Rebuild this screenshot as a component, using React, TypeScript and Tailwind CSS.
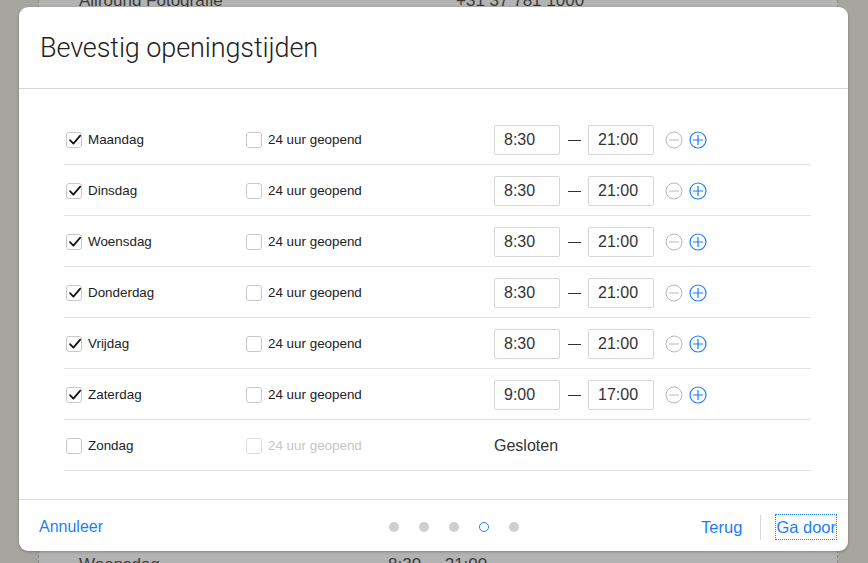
import React from "react";

const days = [
  { name: "Maandag", on: true, from: "8:30", to: "21:00" },
  { name: "Dinsdag", on: true, from: "8:30", to: "21:00" },
  { name: "Woensdag", on: true, from: "8:30", to: "21:00" },
  { name: "Donderdag", on: true, from: "8:30", to: "21:00" },
  { name: "Vrijdag", on: true, from: "8:30", to: "21:00" },
  { name: "Zaterdag", on: true, from: "9:00", to: "17:00" },
  { name: "Zondag", on: false, from: "", to: "" },
];

function Check({ checked, faded }: { checked: boolean; faded?: boolean }) {
  return (
    <span
      className={
        "relative inline-block w-[16px] h-[16px] rounded-[3px] border bg-white " +
        (faded ? "border-[#dedede]" : "border-[#c8c8c8]")
      }
    >
      {checked && (
        <svg className="absolute left-[1px] top-[0px]" width="14" height="14" viewBox="0 0 14 14">
          <path d="M2 7.2 L5.4 10.6 L12.2 2.6" fill="none" stroke="#111" strokeWidth="1.7" strokeLinecap="round" strokeLinejoin="round" />
        </svg>
      )}
    </span>
  );
}

function Minus() {
  return (
    <svg width="18" height="18" viewBox="0 0 18 18">
      <circle cx="9" cy="9" r="8" fill="none" stroke="#b8b8b8" strokeWidth="1" />
      <path d="M4 9 H14" stroke="#b8b8b8" strokeWidth="1" />
    </svg>
  );
}

function Plus() {
  return (
    <svg width="18" height="18" viewBox="0 0 18 18">
      <circle cx="9" cy="9" r="8" fill="none" stroke="#1a7ffb" strokeWidth="1.2" />
      <path d="M4 9 H14 M9 4 V14" stroke="#1a7ffb" strokeWidth="1.2" />
    </svg>
  );
}

export default function App() {
  return (
    <div
      className="relative w-[868px] h-[563px] overflow-hidden bg-[#a6a59f]"
      style={{ fontFamily: '"Liberation Sans", Arial, sans-serif' }}
    >
      {/* page behind */}
      <div className="absolute left-[38px] top-0 w-[800px] h-[563px] bg-[#b3b3b3] border-l border-r border-dashed border-[#8a8a8a]">
        <div className="absolute left-[40px] top-[-12px] text-[17px] text-[#3a3a3a]">Allround Fotografie</div>
        <div className="absolute left-[417px] top-[-12px] text-[17px] text-[#3a3a3a]">+31 37 781 1000</div>
        <div className="absolute left-[40px] top-[552px] text-[17px] text-[#3a3a3a]">Woensdag</div>
        <div className="absolute left-[349px] top-[552px] text-[17px] text-[#3a3a3a]">8:30&nbsp;&nbsp;&nbsp;&nbsp;&nbsp;21:00</div>
      </div>

      {/* modal */}
      <div className="absolute left-[19px] top-[7px] w-[829px] h-[544px] bg-white rounded-[9px] shadow-[0_1px_3px_rgba(0,0,0,0.25)] flex flex-col">
        <div className="h-[82px] border-b border-[#d4d4d4] flex items-center pl-[21px] pt-[2px]">
          <h1
            className="text-[27px] text-[#222] font-light tracking-[-0.1px]"
            style={{ fontFamily: 'Roboto, "Liberation Sans", sans-serif' }}
          >
            Bevestig openingstijden
          </h1>
        </div>

        <div className="flex-1 pt-[25px] pl-[45px] pr-[37px]">
          {days.map((d) => (
            <div key={d.name} className="h-[51px] border-b border-[#e3e3e3] flex items-center pt-[2px]">
              <div className="w-[182px] flex items-center pl-[2px] gap-[6px]">
                <Check checked={d.on} />
                <span className="text-[13.4px] text-[#222]">{d.name}</span>
              </div>
              <div className="w-[248px] flex items-center gap-[6px]">
                <Check checked={false} faded={!d.on} />
                <span className={"text-[13.4px] " + (d.on ? "text-[#222]" : "text-[#c6c6c6]")}>24 uur geopend</span>
              </div>
              {d.on ? (
                <div className="flex items-center">
                  <div className="w-[66px] h-[30px] border border-[#d6d6d6] rounded-[2px] flex items-center pl-[9px] text-[16px] text-[#333]">
                    {d.from}
                  </div>
                  <div className="w-[28px] flex justify-center">
                    <span className="block w-[13px] h-px bg-[#333]"></span>
                  </div>
                  <div className="w-[66px] h-[30px] border border-[#d6d6d6] rounded-[2px] flex items-center pl-[9px] text-[16px] text-[#333]">
                    {d.to}
                  </div>
                  <div className="flex items-center gap-[6px] ml-[11px]">
                    <Minus />
                    <Plus />
                  </div>
                </div>
              ) : (
                <span className="text-[16px] text-[#333]">Gesloten</span>
              )}
            </div>
          ))}
        </div>

        <div className="h-[52px] border-t border-[#dcdcdc] flex items-center pl-[20px] pr-[12px] pt-[3px] text-[16px] text-[#1a7ffb]">
          <div className="w-[350px]">Annuleer</div>
          <div className="flex items-center gap-[20px]">
            <span className="w-[10px] h-[10px] rounded-full bg-[#cfcfcf]"></span>
            <span className="w-[10px] h-[10px] rounded-full bg-[#cfcfcf]"></span>
            <span className="w-[10px] h-[10px] rounded-full bg-[#cfcfcf]"></span>
            <span className="w-[10px] h-[10px] rounded-full border border-[#1a7ffb]"></span>
            <span className="w-[10px] h-[10px] rounded-full bg-[#cfcfcf]"></span>
          </div>
          <div className="flex-1 flex justify-end items-center">
            <span className="text-[16.5px]">Terug</span>
            <span className="w-px h-[25px] bg-[#d6d6d6] ml-[18px] mr-[15px]"></span>
            <span className="text-[16.5px] outline outline-1 outline-dotted outline-[#1a7ffb]">Ga door</span>
          </div>
        </div>
      </div>
    </div>
  );
}
